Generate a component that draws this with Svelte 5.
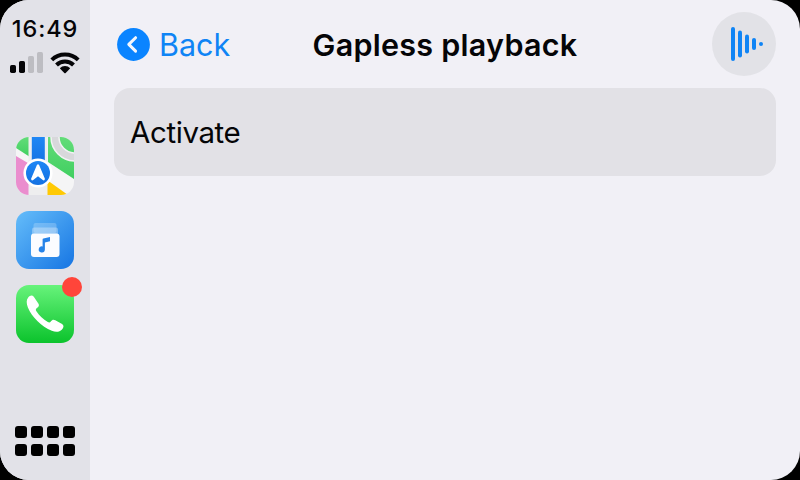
<script>
  const signal = [
    { x: 0, h: 8, on: true },
    { x: 9, h: 12, on: true },
    { x: 18, h: 17, on: false },
    { x: 27, h: 21, on: false },
  ];
  const wave = [
    { x: 43, h: 34 },
    { x: 50, h: 27 },
    { x: 57, h: 19 },
    { x: 64, h: 12 },
    { x: 71, h: 4 },
  ];
</script>

<div class="frame">
  <div class="screen">
    <aside>
      <div class="time">16:49</div>
      <div class="status">
        <svg width="33" height="21" viewBox="0 0 33 21">
          {#each signal as b}
            <rect x={b.x} y={21 - b.h} width="6" height={b.h} rx="1.7" fill={b.on ? '#050507' : '#bdbdc2'} />
          {/each}
        </svg>
        <svg width="30" height="22" viewBox="0 0 30 22">
          <g fill="none" stroke="#050507" stroke-width="4">
            <path d="M1.8 7.8A18.8 18.8 0 0 1 28.2 7.8" />
            <path d="M6.5 13A12 12 0 0 1 23.5 13" />
          </g>
          <path d="M9.8 16.3A7.3 7.3 0 0 1 20.2 16.3L15.7 20.9Q15 21.6 14.3 20.9Z" fill="#050507" />
        </svg>
      </div>

      <nav>
        <svg class="app" viewBox="0 0 58 58">
          <defs>
            <clipPath id="tile"><rect width="58" height="58" rx="13" /></clipPath>
            <linearGradient id="mapGreen" x1="0" y1="0" x2="0" y2="1">
              <stop offset="0" stop-color="#63dc79" /><stop offset="1" stop-color="#40cf60" />
            </linearGradient>
            <linearGradient id="mapBlue" x1="0" y1="0" x2="0" y2="1">
              <stop offset="0" stop-color="#1f87f5" /><stop offset="1" stop-color="#1471e2" />
            </linearGradient>
          </defs>
          <g clip-path="url(#tile)">
            <rect width="58" height="58" fill="#f5f5f6" />
            <path d="M0 0H14V20L0 11Z" fill="url(#mapGreen)" />
            <path d="M0 19L17 29V58H0Z" fill="#ea8dce" />
            <path d="M32 0H58V42L32 25Z" fill="url(#mapGreen)" />
            <circle cx="59" cy="0" r="20" fill="none" stroke="#f2f2f3" stroke-width="9.5" />
            <circle cx="59" cy="0" r="20" fill="none" stroke="#d8d8db" stroke-width="6.5" />
            <path d="M31 43L52 58H31Z" fill="#ffc904" />
            <rect x="12.5" width="19" height="58" fill="#eeeeef" />
            <rect x="15.8" width="13" height="28" fill="url(#mapBlue)" />
            <circle cx="22" cy="36" r="14.6" fill="#fff" />
            <circle cx="22" cy="36" r="12" fill="url(#mapBlue)" />
            <path d="M20.9 28.1Q22 26.2 23.1 28.1L28.9 41.8Q28.7 44.2 26.8 43L22 39.2L17.2 43Q15.3 44.2 15.1 41.8Z" fill="#fff" />
          </g>
        </svg>

        <svg class="app" viewBox="0 0 58 58">
          <defs>
            <linearGradient id="music" x1="0" y1="0" x2="1" y2="1">
              <stop offset="0" stop-color="#65bdfa" /><stop offset="1" stop-color="#1675e3" />
            </linearGradient>
          </defs>
          <rect width="58" height="58" rx="13" fill="url(#music)" />
          <rect x="17.5" y="12" width="23" height="10" rx="2" fill="#fff" opacity=".22" />
          <rect x="16" y="16.5" width="26" height="10" rx="2" fill="#fff" opacity=".32" />
          <rect x="15" y="22.5" width="28.5" height="23.5" rx="3" fill="#fbfcff" />
          <path d="M26.6 28.6Q26.6 27.7 27.4 27.5L34 26V30.2L28.9 31.6V38.6A3.1 3.1 0 1 1 26.6 35.4Z" fill="#2683e8" />
        </svg>

        <div class="phone">
          <svg class="app" viewBox="0 0 58 58">
            <defs>
              <linearGradient id="call" x1="0" y1="0" x2="0" y2="1">
                <stop offset="0" stop-color="#67f37b" /><stop offset="1" stop-color="#0bc32c" />
              </linearGradient>
            </defs>
            <rect width="58" height="58" rx="13" fill="url(#call)" />
            <path d="M12.2 12.4C14.2 10.1 16.2 9.7 17.8 11.8L22.5 18.7C23.6 20.6 22.6 21.8 20.6 23.2C19.5 24.1 19.7 25.2 20.4 26.2C23.4 30.8 27.1 34.2 31.8 37C33 37.7 34 37.6 34.8 36.5C36.4 34.4 37.5 34.4 39.3 35.3L46.1 39.1C48.2 40.6 47.7 42.6 46 44.4C43.4 47.2 39.8 47.5 35.8 45.7C25.5 41.5 15.6 31.5 11.9 22.4C10.3 18.4 10.2 14.7 12.2 12.4Z" fill="#fff" />
          </svg>
          <span class="badge"></span>
        </div>
      </nav>

      <div class="grid">
        {#each Array(8) as _}<i></i>{/each}
      </div>
    </aside>

    <main>
      <header>
        <div class="back">
          <svg width="33" height="33" viewBox="0 0 33 33">
            <circle cx="16.5" cy="16.5" r="16.4" fill="#0a84ff" />
            <path d="M18.6 9.7L11.8 16.4L18.6 23.1" fill="none" stroke="#f4f6fc" stroke-width="3" stroke-linecap="round" stroke-linejoin="round" />
          </svg>
          <span>Back</span>
        </div>
        <h1>Gapless playback</h1>
        <svg class="playing" width="64" height="64" viewBox="22 -32 64 64">
          <circle cx="54" cy="0" r="32" fill="#e2e2e7" />
          {#each wave as w}
            <rect x={w.x - 2} y={-w.h / 2} width="4" height={w.h} rx="2" fill="#0f84f5" />
          {/each}
        </svg>
      </header>
      <div class="row"><span>Activate</span></div>
    </main>
  </div>
</div>

<style>
  .frame {
    width: 800px;
    height: 480px;
    background: #000;
    overflow: hidden;
    font-family: Inter, "Liberation Sans", sans-serif;
    color: #050507;
  }
  .screen {
    display: flex;
    height: 100%;
    border-radius: 29px;
    overflow: hidden;
    background: #f1f0f6;
  }
  svg { display: block; flex: none; }
  aside {
    box-sizing: border-box;
    width: 90px;
    height: 480px;
    padding: 14px 0 24px;
    background: #e2e2e8;
    display: flex;
    flex-direction: column;
    align-items: center;
  }
  .time {
    font-size: 23.5px;
    font-weight: 550;
    letter-spacing: 0.9px;
    line-height: 30px;
    white-space: nowrap;
  }
  .status {
    display: flex;
    gap: 7px;
    height: 22px;
    margin-top: 8px;
    align-self: flex-start;
    padding-left: 10px;
  }
  nav {
    display: flex;
    flex-direction: column;
    gap: 16px;
    margin-top: 63px;
  }
  .app { width: 58px; height: 58px; }
  .phone { position: relative; }
  .badge {
    position: absolute;
    top: -8px;
    right: -8px;
    width: 20px;
    height: 20px;
    border-radius: 50%;
    background: #ff453a;
  }
  .grid {
    display: grid;
    grid-template-columns: repeat(4, 12px);
    gap: 6px 4px;
    margin-top: auto;
  }
  .grid i { height: 12px; border-radius: 3px; background: #000; }
  main { flex: 1; padding: 12px 24px 0; }
  header {
    display: grid;
    grid-template-columns: 150px 1fr 150px;
    align-items: center;
    height: 64px;
  }
  .back {
    display: flex;
    align-items: center;
    gap: 9px;
    padding-left: 3px;
    font-size: 30.5px;
    color: #0f84f5;
  }
  .back span { padding-top: 1px; }
  h1 {
    margin: 0;
    padding-top: 1px;
    text-align: center;
    font-size: 30.5px;
    font-weight: 600;
    letter-spacing: 0.27px;
    white-space: nowrap;
  }
  .playing { justify-self: end; }
  .row {
    display: flex;
    align-items: center;
    box-sizing: border-box;
    height: 88px;
    margin-top: 12px;
    padding: 0 16px;
    border-radius: 16px;
    background: #e2e1e6;
    font-size: 29.5px;
    letter-spacing: -0.4px;
  }
</style>
